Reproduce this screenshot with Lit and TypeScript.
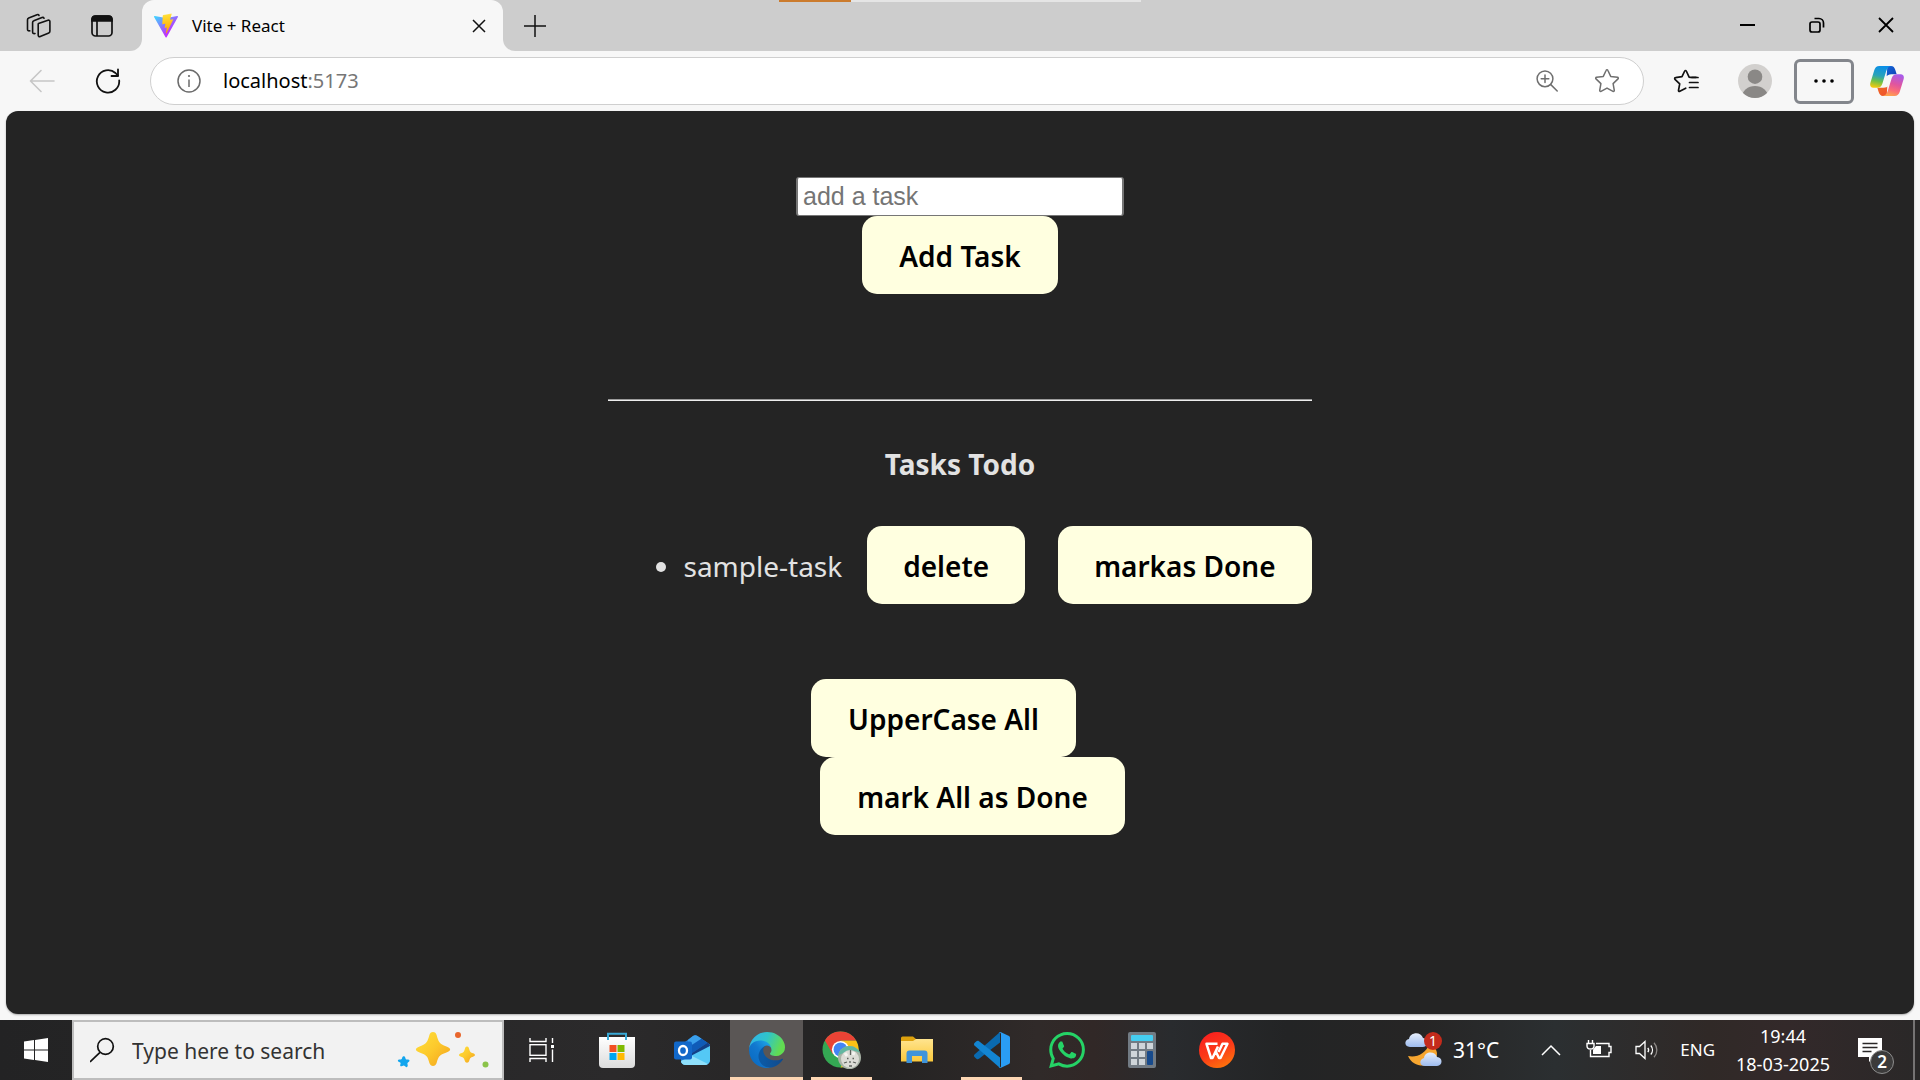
import { LitElement, html, css, type TemplateResult } from "lit";
import { customElement, state } from "lit/decorators.js";

/* ---------- browser icons ---------- */

const workspaces = html`<svg width="26" height="26" viewBox="0 0 26 26" fill="none" stroke="#111" stroke-width="1.6" stroke-linejoin="round" stroke-linecap="round">
  <path d="M12.5 10.5 22 7.2c1-.3 1.9.3 1.9 1.300v9.800c0 .8-.4 1.400-1.100 1.700l-8.600 3.600c-1 .4-2-.2-2-1.300V11.800c0-.7-.2-1 .3-1.300Z"/>
  <path d="M9 20.500c-1.600.4-2.400-.2-2.400-1.500V9.600c0-.9.4-1.500 1.200-1.800l8.200-3.300c.9-.3 1.700 0 2 .7"/>
  <path d="M3.800 17.800c-1.500.3-2.300-.3-2.300-1.600V6.800c0-.9.4-1.500 1.200-1.800L11 1.700c.9-.3 1.700 0 2 .7"/>
</svg>`;

const tabActions = html`<svg width="22" height="22" viewBox="0 0 22 22" fill="none" stroke="#111" stroke-width="1.700">
  <rect x="1" y="1" width="20" height="20" rx="3.500"/>
  <path d="M1 6V4.500C1 2.500 2.500 1 4.500 1h13C19.500 1 21 2.500 21 4.500V6Z" fill="#111"/>
  <path d="M6 6v15"/>
</svg>`;

const viteLogo = html`<svg width="24" height="25" viewBox="0 0 256 257">
  <defs>
    <linearGradient id="vp" x1="0" y1="0.080" x2="0.580" y2="0.780"><stop offset="0" stop-color="#41d1ff"/><stop offset="1" stop-color="#bd34fe"/></linearGradient>
    <linearGradient id="vb" x1="0.430" y1="0.020" x2="0.500" y2="0.890"><stop offset="0" stop-color="#ffea83"/><stop offset="0.080" stop-color="#ffdd35"/><stop offset="1" stop-color="#ffa800"/></linearGradient>
  </defs>
  <path fill="url(#vp)" d="M255.153 37.938 134.897 252.976c-2.483 4.440-8.862 4.466-11.382.048L.875 37.958c-2.746-4.814 1.371-10.646 6.827-9.670l120.385 21.517a6.537 6.537 0 0 0 2.322-.004l117.867-21.483c5.438-.991 9.574 4.796 6.877 9.620Z"/>
  <path fill="url(#vb)" d="M185.432.063 96.440 17.501a3.268 3.268 0 0 0-2.634 3.014l-5.474 92.456a3.268 3.268 0 0 0 3.997 3.378l24.777-5.718c2.318-.535 4.413 1.507 3.936 3.838l-7.361 36.047c-.495 2.426 1.782 4.500 4.151 3.780l15.304-4.649c2.372-.720 4.652 1.360 4.150 3.788l-11.698 56.621c-.732 3.542 3.979 5.473 5.943 2.437l1.313-2.028 72.516-144.720c1.215-2.423-.880-5.186-3.540-4.672l-25.505 4.922c-2.396.462-4.435-1.770-3.759-4.114l16.646-57.705c.677-2.350-1.370-4.583-3.769-4.113Z"/>
</svg>`;

const closeSmall = html`<svg width="14" height="14" viewBox="0 0 14 14" fill="none" stroke="#111" stroke-width="1.500"><path d="m1 1 12 12M13 1 1 13"/></svg>`;
const plus = html`<svg width="22" height="22" viewBox="0 0 22 22" fill="none" stroke="#111" stroke-width="1.500"><path d="M11 0v22M0 11h22"/></svg>`;
const minimize = html`<svg width="15" height="15" viewBox="0 0 15 15" fill="none" stroke="#000" stroke-width="2"><path d="M0 7h15"/></svg>`;
const restore = html`<svg width="16" height="16" viewBox="0 0 16 16" fill="none" stroke="#000" stroke-width="1.700"><rect x="1" y="5" width="10" height="10" rx="2"/><path d="M5.500 1.500h4.500a4.500 4.500 0 0 1 4.500 4.500v4.500"/></svg>`;
const closeWindow = html`<svg width="16" height="16" viewBox="0 0 16 16" fill="none" stroke="#000" stroke-width="1.800"><path d="m1 1 14 14M15 1 1 15"/></svg>`;

const back = html`<svg width="26" height="24" viewBox="0 0 26 24" fill="none" stroke="#c6c6c6" stroke-width="1.600" stroke-linecap="round" stroke-linejoin="round"><path d="M25 12H1.500M12 1.500 1.500 12 12 22.500"/></svg>`;
const reload = html`<svg width="26" height="26" viewBox="0 0 26 26" fill="none" stroke="#111" stroke-width="1.800" stroke-linecap="round" stroke-linejoin="round"><path d="M24.200 12.500A11.200 11.200 0 1 1 20.500 5L23 7.600"/><path d="M23 1.500v6.500h-6.500"/></svg>`;
const info = html`<svg width="24" height="24" viewBox="0 0 24 24" fill="none" stroke="#6b6b6b" stroke-width="1.500"><circle cx="12" cy="12" r="11"/><path d="M12 10.500v7.500"/><circle cx="12" cy="7" r="1.100" fill="#6b6b6b" stroke="none"/></svg>`;
const zoomIn = html`<svg width="22" height="22" viewBox="0 0 22 22" fill="none" stroke="#6f6f6f" stroke-width="1.500" stroke-linecap="round"><circle cx="9" cy="8.800" r="7.900"/><path d="m14.800 14.600 6.400 6.400M9 5v7.600M5.200 8.800h7.600"/></svg>`;
const star = html`<svg width="26" height="26" viewBox="0 0 26 26" fill="none" stroke="#6f6f6f" stroke-width="1.500" stroke-linejoin="round"><path d="M12.200 2.300c.3-.7 1.300-.7 1.600 0l2.900 6.100 6.800.9c.8.100 1.100 1 .5 1.600l-4.900 4.700 1.200 6.700c.1.800-.6 1.400-1.300 1L13 20.100l-6 3.200c-.7.4-1.400-.2-1.300-1l1.200-6.700L2 10.900c-.6-.6-.3-1.500.5-1.600l6.800-.9Z"/></svg>`;
const favorites = html`<svg width="26" height="26" viewBox="0 0 26 26" fill="none" stroke="#111" stroke-width="1.700" stroke-linejoin="round" stroke-linecap="round"><path d="M23 9.300h-5.500l-1.400-.2-2.800-6.100c-.3-.7-1.300-.7-1.600 0L9 8.700l-6.500 1c-.8.100-1.100 1-.5 1.600l4.700 4.500-1.200 6.500c-.1.800.6 1.400 1.300 1l5.900-3.100"/><path d="M16.500 14.500H25M16.500 19.500H25M19 9.500h6"/></svg>`;
const avatar = html`<svg width="34" height="34" viewBox="0 0 34 34"><defs><clipPath id="av"><circle cx="17" cy="17" r="17"/></clipPath></defs><g clip-path="url(#av)"><rect width="34" height="34" fill="#d2d0ce"/><circle cx="17" cy="12.700" r="7.300" fill="#8a8886"/><ellipse cx="17" cy="33" rx="13" ry="11" fill="#8a8886"/></g></svg>`;
const dots = html`<svg width="20" height="4" viewBox="0 0 20 4" fill="#000"><circle cx="2" cy="2" r="1.800"/><circle cx="10" cy="2" r="1.800"/><circle cx="18" cy="2" r="1.800"/></svg>`;
const copilot = html`<svg width="34" height="30" viewBox="0 0 102 90">
  <defs>
    <linearGradient id="c1" x1="0.500" y1="0" x2="0.300" y2="1"><stop offset="0" stop-color="#0a8fe8"/><stop offset="0.450" stop-color="#2aa3b8"/><stop offset="0.700" stop-color="#6cc04a"/><stop offset="1" stop-color="#f3c90e"/></linearGradient>
    <linearGradient id="c2" x1="0.700" y1="0" x2="0.400" y2="1"><stop offset="0" stop-color="#a85bea"/><stop offset="0.450" stop-color="#e0559f"/><stop offset="0.750" stop-color="#fb6e77"/><stop offset="1" stop-color="#fda350"/></linearGradient>
    <linearGradient id="c3" x1="0" y1="0" x2="1" y2="1"><stop offset="0" stop-color="#1667d8"/><stop offset="1" stop-color="#0c3fb5"/></linearGradient>
    <linearGradient id="c4" x1="0" y1="0" x2="1" y2="1"><stop offset="0" stop-color="#ee6b24"/><stop offset="1" stop-color="#f0502f"/></linearGradient>
  </defs>
  <path fill="url(#c3)" d="M52 0h11c7 0 11 5 13 12l4 13H64c-8 0-11 3-14 6Z"/>
  <path fill="url(#c4)" d="M50 90H39c-7 0-11-5-13-12l-4-13h16c8 0 11-3 14-6Z"/>
  <path fill="url(#c1)" d="M28 0h36c-9 1-13 7-16 17L37 53c-3 8-7 12-15 12H10C2 65-1 59 1 51L13 12C15 5 20 0 28 0Z"/>
  <path fill="url(#c2)" d="M74 90H38c9-1 13-7 16-17l11-36c3-8 7-12 15-12h12c8 0 11 6 9 14L89 78c-2 7-7 12-15 12Z"/>
  <path fill="#f7f7f7" d="M60 27h8c-4 2-6 5-7 10l-7 22c-1 3-4 5-7 5h-9c4-2 6-5 7-10l7-21c1-3 4-6 8-6Z"/>
</svg>`;

/* ---------- taskbar icons ---------- */

const windowsLogo = html`<svg width="24" height="24" viewBox="0 0 24 24" fill="#fff"><path d="M0 3.400 10 2v9.500H0ZM11 1.900 24 0v11.500H11ZM0 12.500h10V22L0 20.600ZM11 12.500h13V24l-13-1.900Z"/></svg>`;
const searchGlass = html`<svg width="26" height="26" viewBox="0 0 26 26" fill="none" stroke="#111" stroke-width="1.700"><circle cx="15.500" cy="9.500" r="7.800"/><path d="M10 15.300 0 25"/></svg>`;
const sparkles = html`<svg width="92" height="38" viewBox="0 0 92 38">
  <defs><linearGradient id="sp" x1="0" y1="0" x2="1" y2="1"><stop offset="0" stop-color="#ffe03b"/><stop offset="0.500" stop-color="#fcc92c"/><stop offset="1" stop-color="#f3a01c"/></linearGradient></defs>
  <path fill="url(#sp)" d="M36 1c2 0 3 1 3.600 3 2 7 2.400 8.600 9.800 11.400 5 1.700 5 4.200 0 6C42 24.200 41.600 25 39.600 32c-1.200 4-6 4-7.200 0-2-7-2.400-8-9.800-10.600-5-1.800-5-4.300 0-6C30 12.600 30.400 11 32.400 4 33 2 34 1 36 1Z"/>
  <path fill="url(#sp)" d="M70 15.500c1.500 0 1.700 1 2.300 3 .7 2.500 1.200 3 3.700 3.800 2.600.8 2.600 2.600 0 3.400-2.500.8-3 1.300-3.700 3.800-.8 3-3.800 3-4.600 0-.7-2.500-1.200-3-3.700-3.800-2.600-.8-2.600-2.600 0-3.400 2.500-.8 3-1.300 3.700-3.800.6-2 .8-3 2.300-3Z"/>
  <path fill="#12a5ee" d="M6 25.500c1.200-.5 2 0 2.400 1.400.3 1.400.8 1.700 2.200 1.500 2-.2 2.600 1.300 1 2.500-1.200.9-1.400 1.400-1 2.700.6 2.500-.8 3.300-2.500 1.700-1-1-1.600-1-2.800-.3-1.600.9-2.600-.1-1.900-1.800.5-1.200.2-1.700-1.200-2.200-2-.8-1.600-2.400.5-2.500 1.600 0 2.100-.3 2.400-1.500.2-.8.400-1.300.9-1.500Z"/>
  <circle cx="61" cy="4" r="3" fill="#e8662c"/><circle cx="88.500" cy="33.500" r="3" fill="#8bc34a"/>
</svg>`;

const taskView = html`<svg width="26" height="24" viewBox="0 0 26 24" fill="none" stroke="#fff" stroke-width="1.400"><path d="M1 0v3.500h16V0M1 24v-3.500h16V24M23.500 0v5M23.500 11.500V24"/><rect x="1" y="6.700" width="16" height="10.600"/><rect x="22" y="7" width="3" height="3" fill="#fff" stroke="none"/></svg>`;

const store = html`<svg width="36" height="36" viewBox="0 0 36 36"><defs><linearGradient id="st" x1="0" y1="0" x2="0" y2="1"><stop offset="0" stop-color="#fff"/><stop offset="1" stop-color="#dcdcdc"/></linearGradient></defs>
  <path d="M0 5h36v27a4 4 0 0 1-4 4H4a4 4 0 0 1-4-4Z" fill="url(#st)"/><path d="M9 8V1.800h18V8" fill="none" stroke="#38a9d6" stroke-width="2"/>
  <path fill="#f25022" d="M10.500 13h7v7h-7Z"/><path fill="#7fba00" d="M18.500 13h7v7h-7Z"/><path fill="#00a4ef" d="M10.500 21h7v7h-7Z"/><path fill="#ffb900" d="M18.500 21h7v7h-7Z"/></svg>`;

const outlook = html`<svg width="36" height="32" viewBox="0 0 36 32"><path d="M7 11 19 2c1.500-1 3-1 4.500 0L36 10.500V26a5 5 0 0 1-5 5H12a5 5 0 0 1-5-5Z" fill="#2a7fd8"/>
  <path d="m14 6 5-4c1.500-1 3-1 4.500 0l4 2.700L14 13Z" fill="#3aa0ec"/><path d="m27.500 4.700 6 4L15 21V13Z" fill="#0f5bb8"/><path d="M33.500 8.700c1.600 1 2.500 2 2.500 3.500L20 22l-5-1Z" fill="#123f86"/>
  <path d="M36 12v14a5 5 0 0 1-5 5H12c-3 0-5-1.500-5-4Z" fill="#54c8f5"/><path d="m18 22 16 8c-1 .7-2 1-3 1H12c-3 0-5-2-5-4Z" fill="#8fe0fb"/>
  <rect y="7.500" width="18" height="18" rx="2" fill="#1268c9"/><ellipse cx="9" cy="16.500" rx="4" ry="4.500" fill="none" stroke="#fff" stroke-width="2.300"/></svg>`;

const edge = html`<svg width="36" height="36" viewBox="0 0 256 256"><defs>
  <linearGradient id="e1" x1="0.200" y1="0.600" x2="1" y2="0.600"><stop offset="0" stop-color="#0c59a4"/><stop offset="1" stop-color="#114a8b"/></linearGradient>
  <linearGradient id="e2" x1="0.900" y1="0.300" x2="0.250" y2="1"><stop offset="0" stop-color="#1b9de2"/><stop offset="0.400" stop-color="#1278cf"/><stop offset="1" stop-color="#0a6bc2"/></linearGradient>
  <linearGradient id="e3" x1="0" y1="0.300" x2="1" y2="0.600"><stop offset="0" stop-color="#2fb4ea"/><stop offset="0.450" stop-color="#30c5c8"/><stop offset="0.900" stop-color="#62dc52"/></linearGradient></defs>
  <path fill="url(#e1)" d="M235.680 190.390c-3.400 1.780-6.910 3.360-10.500 4.730a101.900 101.900 0 0 1-35.870 6.460c-47.290 0-88.480-32.530-88.480-74.270a31.500 31.500 0 0 1 16.420-27.310C74.500 101.800 63.500 146.400 63.500 172.500c0 73.880 68.090 81.370 82.760 81.370 7.910 0 19.840-2.300 27-4.560l1.310-.440a128.340 128.340 0 0 0 66.600-52.800 4 4 0 0 0-5.490-5.680z"/>
  <path fill="url(#e2)" d="M105.730 241.420a79.200 79.200 0 0 1-22.740-21.340 80.720 80.720 0 0 1 29.530-120c3.130-1.470 8.450-4.130 15.530-4a32.350 32.350 0 0 1 25.690 13 31.880 31.880 0 0 1 6.360 18.660c0-.210 24.460-79.600-80-79.600-43.900 0-80 41.660-80 78.210a130.150 130.150 0 0 0 12.110 56 128 128 0 0 0 156.380 67.110 75.550 75.550 0 0 1-62.780-8z"/>
  <path fill="url(#e3)" d="M152.330 148.860c-.810 1.050-3.300 2.500-3.300 5.660 0 2.610 1.700 5.120 4.720 7.230 14.380 10 41.490 8.680 41.560 8.680a59.560 59.560 0 0 0 30.270-8.350A61.380 61.380 0 0 0 256 109.200c.260-22.410-8-37.310-11.340-43.910C223.460 23.840 177.720 0 128 0A128 128 0 0 0 0 126.200c.480-36.540 36.800-66.050 80-66.050 3.500 0 23.460.340 42 10.070 16.340 8.580 24.900 18.940 30.850 29.210 6.180 10.670 7.280 24.150 7.280 29.520 0 5.370-2.740 13.330-7.800 19.910z"/></svg>`;

const chrome = html`<svg width="40" height="40" viewBox="0 0 40 40"><defs><clipPath id="pf"><circle cx="27.500" cy="27.500" r="11.500"/></clipPath></defs>
  <circle cx="18.500" cy="19.500" r="18" fill="#34a853"/>
  <path d="M18.500 10.500h15.600a18 18 0 0 1-15.600 27l8-13.500Z" fill="#fbc116"/><path d="M2.900 10.500a18 18 0 0 1 31.200 0H18.500L10.700 24Z" fill="#ea4335"/>
  <circle cx="18.500" cy="19.500" r="8.600" fill="#fff"/><circle cx="18.500" cy="19.500" r="6.900" fill="#4285f4"/>
  <g clip-path="url(#pf)"><rect x="16" y="16" width="24" height="24" fill="#a9b3a6"/><path d="M16 16h24v8c-4-3-8-4-12-3s-8 2-12 5Z" fill="#63b7a0"/><circle cx="28" cy="29" r="9" fill="#dcdcd6"/><path d="m23 23 2 3M32 22l-1 3" stroke="#f4f4f0" stroke-width="3"/><path d="M28.500 20v5M25 28.500h1.500M30.500 28.500H32M28 31v2M22 33l3-1M34 33l-3-1M27 36h3" stroke="#5e625d" stroke-width="1.300"/></g></svg>`;

const explorer = html`<svg width="32" height="28" viewBox="0 0 32 28"><defs><linearGradient id="fx" x1="0" y1="0" x2="0" y2="1"><stop offset="0" stop-color="#ffe48f"/><stop offset="1" stop-color="#fbc93b"/></linearGradient></defs>
  <path d="M0 2a1.500 1.500 0 0 1 1.500-1.500H12L15 3v4H0Z" fill="#dda10d"/><path d="M0 5h12l3-2h17v22.500H0Z" fill="url(#fx)"/>
  <path d="M5.500 27V17.500a3 3 0 0 1 3-3h15a3 3 0 0 1 3 3V27H21v-7H11v7Z" fill="#3f94da"/></svg>`;

const vscode = html`<svg width="36" height="36" viewBox="0 0 36 36"><path d="M26 0v10.500L5 26.800c-1 .700-1.800.600-2.600-.1L.5 25c-.7-.7-.7-1.700 0-2.400Z" fill="#0a6ab0"/>
  <path d="M26 36V25.500L5 9.200c-1-.7-1.800-.6-2.600.1L.5 11c-.7.7-.7 1.700 0 2.400Z" fill="#1385d2"/>
  <path d="M26.500 36c-.8.200-1.500-.2-2-.7 1 .7 2.500.2 2.500-1.300V2c0-1.500-1.500-2-2.500-1.300.5-.6 1.200-.9 2-.6L35 4.100c.7.400 1 1 1 1.700v24.400c0 .8-.3 1.400-1 1.700Z" fill="#2a9df4"/></svg>`;

const whatsapp = html`<svg width="36" height="36" viewBox="0 0 24 24" fill="#25d366"><path d="M17.472 14.382c-.297-.149-1.758-.867-2.030-.967-.273-.099-.471-.148-.670.150-.197.297-.767.966-.940 1.164-.173.199-.347.223-.644.075-.297-.150-1.255-.463-2.390-1.475-.883-.788-1.480-1.761-1.653-2.059-.173-.297-.018-.458.130-.606.134-.133.298-.347.446-.520.149-.174.198-.298.298-.497.099-.198.050-.371-.025-.520-.075-.149-.669-1.612-.916-2.207-.242-.579-.487-.500-.669-.510-.173-.008-.371-.010-.570-.010-.198 0-.520.074-.792.372-.272.297-1.040 1.016-1.040 2.479 0 1.462 1.065 2.875 1.213 3.074.149.198 2.096 3.200 5.077 4.487.709.306 1.262.489 1.694.625.712.227 1.360.195 1.871.118.571-.085 1.758-.719 2.006-1.413.248-.694.248-1.289.173-1.413-.074-.124-.272-.198-.570-.347m-5.421 7.403h-.004a9.870 9.870 0 0 1-5.031-1.378l-.361-.214-3.741.982.998-3.648-.235-.374a9.860 9.860 0 0 1-1.510-5.260c.001-5.450 4.436-9.884 9.888-9.884 2.640 0 5.122 1.030 6.988 2.898a9.825 9.825 0 0 1 2.893 6.994c-.003 5.450-4.437 9.884-9.885 9.884m8.413-18.297A11.815 11.815 0 0 0 12.050 0C5.495 0 .160 5.335.157 11.892c0 2.096.547 4.142 1.588 5.945L.057 24l6.305-1.654a11.882 11.882 0 0 0 5.683 1.448h.005c6.554 0 11.890-5.335 11.893-11.893a11.821 11.821 0 0 0-3.480-8.413z"/></svg>`;

const calculator = html`<svg width="28" height="36" viewBox="0 0 28 36"><rect width="28" height="36" rx="2" fill="#727b84"/><rect x="3" y="3" width="22" height="6" rx="1" fill="#45cdf0"/>
  <path fill="#cfd5da" d="M3 11h6v6H3ZM11 11h6v6h-6ZM19 11h6v6h-6ZM3 19h6v6H3ZM11 19h6v6h-6ZM3 27h6v6H3ZM11 27h6v6h-6Z"/><rect x="19" y="19" width="6" height="14" rx="1" fill="#174a8c"/></svg>`;

const wps = html`<svg width="36" height="36" viewBox="0 0 36 36"><defs><linearGradient id="wp" x1="0.300" y1="0" x2="0.800" y2="1"><stop offset="0" stop-color="#f9201f"/><stop offset="0.500" stop-color="#fb3a18"/><stop offset="1" stop-color="#fe7a0b"/></linearGradient></defs>
  <circle cx="18" cy="18" r="18" fill="url(#wp)"/><path d="M18.500 11.800H7.500L12 26h1.500L19 14.500M16.500 19l3.500 7h1.500l7-14.200H23.500L19.500 20" fill="none" stroke="#fff" stroke-width="2.500" stroke-linejoin="round"/></svg>`;

const weather = html`<svg width="38" height="36" viewBox="0 0 38 36"><defs><linearGradient id="cl" x1="0" y1="0" x2="0" y2="1"><stop offset="0" stop-color="#e6eefc"/><stop offset="1" stop-color="#9dbbee"/></linearGradient></defs>
  <path d="M3 24c8 2 18-2 21-12 8 3 10 10 6 16-6 8-22 8-27-4Z" fill="#f7a630"/>
  <path d="M5 15c-6 0-6-7-1-8 1-7 12-8 14-1 6 0 6 9 0 9Z" fill="url(#cl)"/><path d="M20 34c-6 0-6-7-1-8 1-7 11-7 13-1 6 0 6 9 0 9Z" fill="url(#cl)"/></svg>`;

const chevronUp = html`<svg width="20" height="12" viewBox="0 0 20 12" fill="none" stroke="#fff" stroke-width="1.500"><path d="m1 11 9-9 9 9"/></svg>`;
const battery = html`<svg width="26" height="20" viewBox="0 0 26 20" fill="none" stroke="#fff" stroke-width="1.400"><path d="M10 3.500h13v3h2v6h-2v4H4.500V10"/><path d="M7 14V9.500L10 6h5v8Z" fill="#fff" stroke="none"/><path d="M2.500 0v3M6.500 0v3M1 3.500h7v2.500C8 8 6.500 9 4.500 9S1 8 1 6Z"/></svg>`;
const speaker = html`<svg width="24" height="20" viewBox="0 0 24 20" fill="none" stroke="#fff" stroke-width="1.300"><path d="M1 6.500h3.500L10 1.500v17l-5.500-5H1Z"/><path d="M12.800 7.800c1 1.300 1 3.100 0 4.400M15.800 5.500c2.200 2.600 2.200 6.400 0 9"/><path d="M19 2.700c3.800 4.200 3.800 10.400 0 14.600" stroke="#8c8886"/></svg>`;
const notification = html`<svg width="24" height="24" viewBox="0 0 24 24"><path d="M0 0h24v19h-8l-5 5v-5H0Z" fill="#fff"/><path d="M4.500 5.500h15M4.500 9.500h15M4.500 13.500h9" stroke="#2b2828" stroke-width="1.300"/></svg>`;

interface TaskbarApp { name: string; icon: TemplateResult; state?: "open" | "active" }

const APPS: TaskbarApp[] = [
  { name: "Task View", icon: taskView },
  { name: "Microsoft Store", icon: store },
  { name: "Outlook", icon: outlook },
  { name: "Microsoft Edge", icon: edge, state: "active" },
  { name: "Google Chrome", icon: chrome, state: "open" },
  { name: "File Explorer", icon: explorer },
  { name: "Visual Studio Code", icon: vscode, state: "open" },
  { name: "WhatsApp", icon: whatsapp },
  { name: "Calculator", icon: calculator },
  { name: "WPS Office", icon: wps },
];

const reset = css`
  * { box-sizing: border-box; }
  button { appearance: none; border: 0; margin: 0; padding: 0; background: none; font: inherit; color: inherit; display: flex; align-items: center; justify-content: center; cursor: pointer; flex: none; }
  svg { display: block; flex: none; }
`;

@customElement("browser-chrome")
export class BrowserChrome extends LitElement {
  static styles = [reset, css`
    :host { display: block; background: #f7f7f7; color: #000; }
    .strip { position: relative; display: flex; height: 51px; }
    .gray { background: #cdcdcd; display: flex; align-items: center; }
    .lead { width: 142px; padding-left: 26px; gap: 39px; border-bottom-right-radius: 12px; }
    .tab-bed { background: #cdcdcd; height: 39px; }
    .tab { width: 361px; height: 51px; background: #f7f7f7; border-radius: 12px 12px 0 0; display: flex; align-items: center; padding: 0 17px 0 12px; gap: 14px; font-size: 17px; }
    .tab span { flex: 1; }
    .rest { flex: 1; border-bottom-left-radius: 12px; padding-left: 21px; }
    .controls { margin-left: auto; display: flex; height: 100%; }
    .controls button { width: 69px; height: 50px; }
    .loading { position: absolute; top: 0; left: 50%; width: 362px; height: 2px; transform: translateX(-50%); background: #e5e5e5; }
    .loading i { display: block; width: 20%; height: 100%; background: #cb7b2d; }
    .bar { display: flex; align-items: center; height: 60px; padding: 0 16px 0 29px; }
    .reload { margin: 0 29px 0 40px; }
    .address { flex: 1; height: 48px; display: flex; align-items: center; background: #fff; border: 1px solid #cfcfcf; border-radius: 24px; padding: 0 23px 0 26px; margin-right: 29px; }
    .url { flex: 1; font-size: 20px; line-height: 28px; margin-left: 22px; color: #767676; }
    .url b { font-weight: 400; color: #000; }
    .star { margin-left: 36px; }
    .avatar { margin: 0 22px 0 39px; }
    .more { width: 60px; height: 45px; border: 3px solid #83868c; border-radius: 6px; margin-right: 16px; }
  `];

  render() {
    return html`
      <header>
        <div class="strip">
          <div class="gray lead"><button aria-label="Workspaces">${workspaces}</button><button aria-label="Tab actions">${tabActions}</button></div>
          <div class="tab-bed"><div class="tab">${viteLogo}<span>Vite + React</span><button aria-label="Close tab">${closeSmall}</button></div></div>
          <div class="gray rest">
            <button aria-label="New tab">${plus}</button>
            <div class="controls">
              <button aria-label="Minimize">${minimize}</button><button aria-label="Restore">${restore}</button><button aria-label="Close">${closeWindow}</button>
            </div>
          </div>
          <div class="loading"><i></i></div>
        </div>
        <nav class="bar">
          <button aria-label="Back" disabled>${back}</button>
          <button class="reload" aria-label="Refresh">${reload}</button>
          <div class="address">
            <button aria-label="Site information">${info}</button>
            <span class="url"><b>localhost</b>:5173</span>
            <button aria-label="Zoom">${zoomIn}</button>
            <button class="star" aria-label="Add to favorites">${star}</button>
          </div>
          <button aria-label="Favorites">${favorites}</button>
          <button class="avatar" aria-label="Profile">${avatar}</button>
          <button class="more" aria-label="Settings and more">${dots}</button>
          <button aria-label="Copilot">${copilot}</button>
        </nav>
      </header>`;
  }
}

interface Task { id: number; text: string; done: boolean }

@customElement("todo-list")
export class TodoList extends LitElement {
  static styles = [reset, css`
    :host { display: block; color: #e2e2e2; font-size: 28px; line-height: 36px; }
    .page { display: flex; flex-direction: column; align-items: center; padding: 66px 24px; }
    form { display: flex; flex-direction: column; align-items: center; }
    input { width: 328px; height: 39px; font: 25px "Liberation Sans", Arial, sans-serif; padding: 2px 5px; border: 2px solid #767676; border-width: 1px 2px; border-radius: 3px; background: #fff; color: #000; }
    input::placeholder { color: #757575; opacity: 1; }
    button { height: 78px; padding: 2px 37px 0; border-radius: 15px; background: #ffffe0; color: #000; font-weight: 600; }
    .list { display: flex; flex-direction: column; margin-top: 105px; }
    hr { width: 100%; height: 2px; margin: 0; border: 0; border-top: 1px solid #9a9a9a; background: #eee; }
    h4 { margin: 45px 0 44px; font-size: 28px; font-weight: 700; text-align: center; }
    ul { margin: 0; padding: 0 0 0 75px; }
    .row { display: flex; align-items: center; }
    .row span { padding-top: 2px; }
    .row button { margin-left: 25px; padding: 2px 36px 0; }
    .row button + button { margin-left: 33px; }
    .done { text-decoration: line-through; }
    .all { display: flex; flex-direction: column; align-items: center; margin-top: 75px; }
    .upper { margin-right: 33px; }
    .mark { margin-left: 25px; }
  `];

  @state() private tasks: Task[] = [{ id: 1, text: "sample-task", done: false }];
  @state() private draft = "";

  private add(e: Event) {
    e.preventDefault();
    if (!this.draft.trim()) return;
    this.tasks = [...this.tasks, { id: Date.now(), text: this.draft, done: false }];
    this.draft = "";
  }

  render() {
    return html`
      <main class="page">
        <form @submit=${this.add}>
          <input type="text" aria-label="add a task" placeholder="add a task" .value=${this.draft} @input=${(e: Event) => (this.draft = (e.target as HTMLInputElement).value)} />
          <button type="submit">Add Task</button>
        </form>
        <section class="list">
          <hr />
          <h4>Tasks Todo</h4>
          <ul>
            ${this.tasks.map((t) => html`<li><div class="row">
              <span class=${t.done ? "done" : ""}>${t.text}</span>
              <button @click=${() => (this.tasks = this.tasks.filter((x) => x.id !== t.id))}>delete</button>
              <button @click=${() => (this.tasks = this.tasks.map((x) => (x.id === t.id ? { ...x, done: true } : x)))}>markas Done</button>
            </div></li>`)}
          </ul>
        </section>
        <div class="all">
          <button class="upper" @click=${() => (this.tasks = this.tasks.map((x) => ({ ...x, text: x.text.toUpperCase() })))}>UpperCase All</button>
          <button class="mark" @click=${() => (this.tasks = this.tasks.map((x) => ({ ...x, done: true })))}>mark All as Done</button>
        </div>
      </main>`;
  }
}

@customElement("task-bar")
export class TaskBar extends LitElement {
  static styles = [reset, css`
    :host { display: block; color: #fff; }
    .bar { display: flex; height: 60px; background: linear-gradient(90deg, #232324 0%, #2b2a2b 32%, #242323 46%, #302a29 54%, #312827 57%, #292b2e 61%, #232425 67%, #262525 74%, #2b2f31 81%, #302927 89%, #33292a 93%, #2a2828 100%); }
    .start { width: 72px; }
    .search { width: 432px; display: flex; align-items: center; gap: 16px; padding: 0 13px 0 16px; border: 2px solid #bdbdbd; background: #f2f2f2; }
    .search input { flex: 1; min-width: 0; border: 0; padding: 2px 0 0; background: none; font: inherit; font-size: 21px; line-height: 28px; color: #333; outline: none; }
    .search input::placeholder { color: #333; opacity: 1; }
    .app { width: 75px; border: solid transparent; border-width: 0 7px; }
    .app.active { width: 73px; margin: 0 1px; border: 0; background: #5a5655; }
    .app.open, .app.active { box-shadow: inset 0 -3px #fdd6b3; }
    .tray { margin-left: auto; display: flex; align-items: center; font-size: 17px; line-height: 28px; }
    .weather { font-size: 21px; gap: 10px; margin-right: 42px; }
    .art { position: relative; display: block; }
    .badge { position: absolute; display: flex; align-items: center; justify-content: center; border-radius: 50%; }
    .alerts { top: 0; right: 1px; width: 18px; height: 18px; background: #c42b1c; font-size: 14px; }
    .chevron { margin-right: 25px; }
    .battery { margin-right: 23px; }
    .speaker { margin-right: 21px; }
    .clock { display: flex; flex-direction: column; align-items: center; margin: 0 28px 0 21px; font-size: 18px; }
    .notes { margin-right: 31px; }
    .count { left: 12px; top: 12px; width: 24px; height: 24px; background: #3c3b3b; border: 1px solid #8d8d8d; font-size: 17px; font-weight: 600; }
    .desktop { width: 7px; height: 60px; border-left: 2px solid #757373; }
  `];

  render() {
    return html`
      <footer class="bar">
        <button class="start" aria-label="Start">${windowsLogo}</button>
        <label class="search">${searchGlass}<input type="text" aria-label="Type here to search" placeholder="Type here to search" />${sparkles}</label>
        ${APPS.map((a) => html`<button class="app ${a.state ?? ""}" aria-label=${a.name}>${a.icon}</button>`)}
        <div class="tray">
          <button class="weather"><span class="art">${weather}<span class="badge alerts">1</span></span>31°C</button>
          <button class="chevron" aria-label="Show hidden icons">${chevronUp}</button>
          <button class="battery" aria-label="Battery">${battery}</button>
          <button class="speaker" aria-label="Volume">${speaker}</button>
          <button>ENG</button>
          <button class="clock"><span>19:44</span><span>18-03-2025</span></button>
          <button class="notes" aria-label="Notifications"><span class="art">${notification}<span class="badge count">2</span></span></button>
          <button class="desktop" aria-label="Show desktop"></button>
        </div>
      </footer>`;
  }
}

@customElement("app-root")
export class AppRoot extends LitElement {
  static styles = css`
    :host { display: flex; flex-direction: column; min-height: 100vh; background: #f7f7f7; font-family: "Noto Sans", "Open Sans", sans-serif; }
    .viewport { flex: 1; margin: 0 6px 6px; border-radius: 12px; background: #242424; box-shadow: 0 1px 2px rgba(0, 0, 0, 0.3); }
  `;

  render() {
    return html`<browser-chrome></browser-chrome><div class="viewport"><todo-list></todo-list></div><task-bar></task-bar>`;
  }
}
